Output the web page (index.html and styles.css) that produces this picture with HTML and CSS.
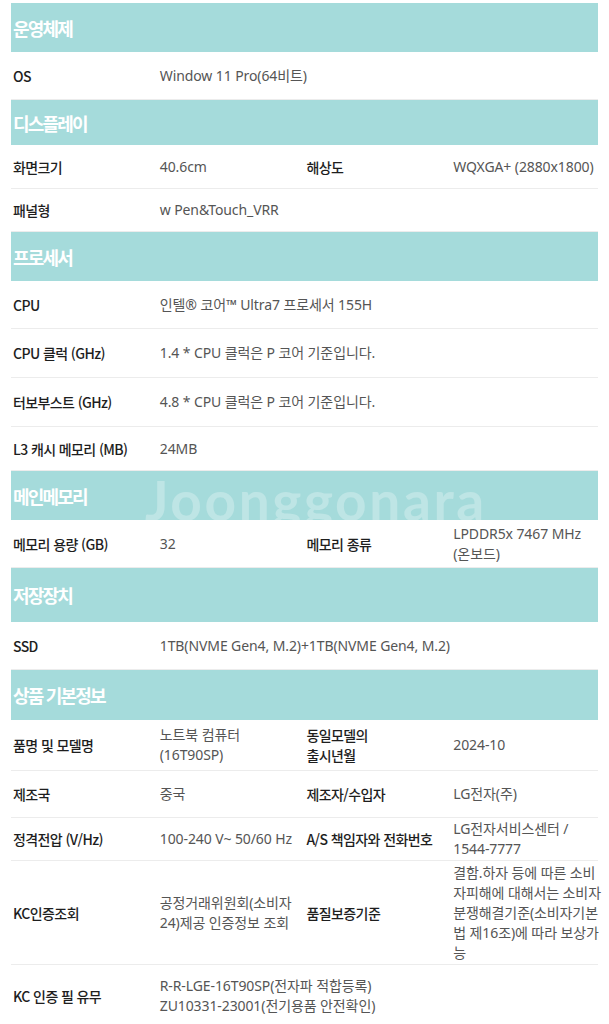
FILE: index.html
```html
<!DOCTYPE html>
<html lang="ko">
<head>
<meta charset="utf-8">
<title>제품 사양</title>
<link rel="stylesheet" href="styles.css">
</head>
<body>
<div class="spec">
  <section class="group">
    <h2 class="group-title h49">운영체제</h2>
    <div class="row h48">
      <div class="label">OS</div>
      <div class="value span3">Window 11 Pro(64비트)</div>
    </div>
  </section>

  <section class="group">
    <h2 class="group-title h45">디스플레이</h2>
    <div class="row h44">
      <div class="label">화면크기</div>
      <div class="value">40.6cm</div>
      <div class="label">해상도</div>
      <div class="value">WQXGA+ (2880x1800)</div>
    </div>
    <div class="row h43">
      <div class="label">패널형</div>
      <div class="value span3">w Pen&amp;Touch_VRR</div>
    </div>
  </section>

  <section class="group">
    <h2 class="group-title h49">프로세서</h2>
    <div class="row h48">
      <div class="label">CPU</div>
      <div class="value span3">인텔® 코어™ Ultra7 프로세서 155H</div>
    </div>
    <div class="row h49">
      <div class="label">CPU 클럭 (GHz)</div>
      <div class="value span3">1.4 * CPU 클럭은 P 코어 기준입니다.</div>
    </div>
    <div class="row h49">
      <div class="label">터보부스트 (GHz)</div>
      <div class="value span3">4.8 * CPU 클럭은 P 코어 기준입니다.</div>
    </div>
    <div class="row h44">
      <div class="label">L3 캐시 메모리 (MB)</div>
      <div class="value span3">24MB</div>
    </div>
  </section>

  <section class="group">
    <h2 class="group-title h49">메인메모리<span class="watermark" aria-hidden="true">Joonggonara</span></h2>
    <div class="row h48">
      <div class="label">메모리 용량 (GB)</div>
      <div class="value">32</div>
      <div class="label">메모리 종류</div>
      <div class="value">LPDDR5x 7467 MHz<br>(온보드)</div>
    </div>
  </section>

  <section class="group">
    <h2 class="group-title h54">저장장치</h2>
    <div class="row h48">
      <div class="label">SSD</div>
      <div class="value span3">1TB(NVME Gen4, M.2)+1TB(NVME Gen4, M.2)</div>
    </div>
  </section>

  <section class="group">
    <h2 class="group-title h50">상품 기본정보</h2>
    <div class="row h51">
      <div class="label">품명 및 모델명</div>
      <div class="value">노트북 컴퓨터<br>(16T90SP)</div>
      <div class="label">동일모델의<br>출시년월</div>
      <div class="value">2024-10</div>
    </div>
    <div class="row h47">
      <div class="label">제조국</div>
      <div class="value">중국</div>
      <div class="label">제조자/수입자</div>
      <div class="value">LG전자(주)</div>
    </div>
    <div class="row h43">
      <div class="label">정격전압 (V/Hz)</div>
      <div class="value">100-240 V~ 50/60 Hz</div>
      <div class="label">A/S 책임자와 전화번호</div>
      <div class="value">LG전자서비스센터 /<br>1544-7777</div>
    </div>
    <div class="row h104">
      <div class="label">KC인증조회</div>
      <div class="value">공정거래위원회(소비자<br>24)제공 인증정보 조회</div>
      <div class="label">품질보증기준</div>
      <div class="value">결함.하자 등에 따른 소비<br>자피해에 대해서는 소비자<br>분쟁해결기준(소비자기본<br>법 제16조)에 따라 보상가<br>능</div>
    </div>
    <div class="row h62">
      <div class="label">KC 인증 필 유무</div>
      <div class="value span3">R-R-LGE-16T90SP(전자파 적합등록)<br>ZU10331-23001(전기용품 안전확인)</div>
    </div>
  </section>
</div>
</body>
</html>
```

FILE: styles.css
```css
* {
  box-sizing: border-box;
  margin: 0;
  padding: 0;
}

body {
  background: #ffffff;
  font-family: "Noto Sans CJK KR", "Noto Sans", sans-serif;
}

.spec {
  width: 587px;
  margin: 3px 0 0 11px;
}

.group-title {
  position: relative;
  overflow: hidden;
  display: flex;
  align-items: center;
  padding-left: 2px;
  background: #a5dbdb;
  color: #ffffff;
  font-size: 18px;
  font-weight: 700;
  letter-spacing: -1.8px;
}

.watermark {
  position: absolute;
  left: 134px;
  top: 2px;
  font-family: "Lato", sans-serif;
  font-size: 55px;
  line-height: 1;
  font-weight: 700;
  letter-spacing: 2.6px;
  color: rgba(255, 255, 255, 0.28);
  pointer-events: none;
}

.row {
  display: grid;
  grid-template-columns: repeat(4, minmax(0, 1fr));
  align-items: center;
  border-bottom: 1px solid #ececec;
  font-size: 14px;
  line-height: 20px;
}

.label {
  padding-left: 2px;
  color: #1e1e1e;
  font-weight: 500;
  letter-spacing: -0.6px;
  white-space: nowrap;
}

.value {
  padding-left: 2px;
  font-family: "Noto Sans", "Noto Sans CJK KR", sans-serif;
  color: #555555;
  letter-spacing: -0.1px;
  white-space: nowrap;
}

.span3 {
  grid-column: span 3;
}

.h43 { height: 43px; }
.h44 { height: 44px; }
.h45 { height: 45px; }
.h47 { height: 47px; }
.h48 { height: 48px; }
.h49 { height: 49px; }
.h50 { height: 50px; }
.h51 { height: 51px; }
.h54 { height: 54px; }
.h62 { height: 62px; }
.h104 { height: 104px; }
```
